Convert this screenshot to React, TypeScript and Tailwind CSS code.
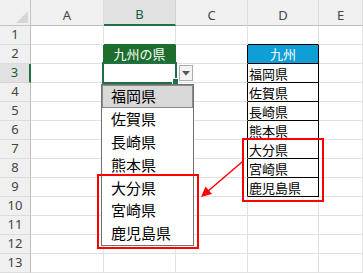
import React from "react";

const COLS = ["A", "B", "C", "D", "E"];
const ROWS = Array.from({ length: 13 }, (_, i) => i + 1);
const DDATA: Record<number, string> = {
  3: "福岡県",
  4: "佐賀県",
  5: "長崎県",
  6: "熊本県",
  7: "大分県",
  8: "宮崎県",
  9: "鹿児島県",
};
const LIST = ["福岡県", "佐賀県", "長崎県", "熊本県", "大分県", "宮崎県", "鹿児島県"];

const jp = { fontFamily: '"Noto Sans CJK JP", "Noto Sans", sans-serif' };
const ui = { fontFamily: '"Noto Sans", "Liberation Sans", sans-serif' };

function cellClass(r: number, c: string): string {
  if (c === "B" && r === 2) return "bg-[#1d6e2c] border-r border-b border-[#1d6e2c] text-white flex items-center justify-center text-[13px]";
  if (c === "B" && r === 1) return "bg-white border-r border-b border-r-[#e1e1e1] border-b-[#1d6e2c]";
  if (c === "D" && r === 1) return "bg-white border-r border-b border-r-[#e1e1e1] border-b-black";
  if (c === "D" && r === 2) return "bg-[#0f9ed5] border-r border-b border-black text-white flex items-center justify-center text-[13px]";
  if (c === "D" && r >= 3 && r <= 9) return "bg-white border-r border-b border-black text-black flex items-center pl-px pt-[2px] text-[13px]";
  if (c === "C" && r >= 2 && r <= 9) return "bg-white border-r border-b border-r-black border-b-[#e1e1e1]";
  if (c === "A" && r === 2) return "bg-white border-r border-b border-r-[#1d6e2c] border-b-[#e1e1e1]";
  return "bg-white border-r border-b border-[#e1e1e1]";
}

function cellText(r: number, c: string): string {
  if (c === "B" && r === 2) return "九州の県";
  if (c === "D" && r === 2) return "九州";
  if (c === "D" && DDATA[r]) return DDATA[r];
  return "";
}

export default function App() {
  return (
    <div className="relative w-[363px] h-[273px] overflow-hidden bg-white">
      <div className="grid grid-cols-[31px_73px_72px_72px_71px_1fr] grid-rows-[26px_repeat(13,19px)]">
        {/* corner */}
        <div className="relative bg-[#f0f0f0] border-r border-b border-[#c4c4c4]">
          <svg className="absolute left-0 top-0" width="31" height="26">
            <polygon points="16,23 28,23 28,11" fill="#d6d6d6" />
          </svg>
        </div>
        {COLS.map((c) =>
          c === "B" ? (
            <div
              key={c}
              className="bg-[#e1e1e1] border-r border-r-[#d0d0d0] border-b-2 border-b-[#1e7145] flex items-center justify-center pt-[6px] text-[13px] text-[#1e5c38]"
              style={ui}
            >
              {c}
            </div>
          ) : (
            <div
              key={c}
              className="bg-[#f0f0f0] border-r border-r-[#dcdcdc] border-b border-b-[#bdbdbd] flex items-center justify-center pt-[6px] text-[13px] text-[#444]"
              style={ui}
            >
              {c}
            </div>
          )
        )}
        {ROWS.map((r) => (
          <React.Fragment key={r}>
            {r === 3 ? (
              <div
                className="bg-[#e1e1e1] border-r-2 border-r-[#1e7145] border-b border-b-[#d4d4d4] flex items-center justify-center text-[13px] text-[#1e5c38]"
                style={ui}
              >
                {r}
              </div>
            ) : (
              <div
                className="bg-[#f0f0f0] border-r border-r-[#bdbdbd] border-b border-b-[#dcdcdc] flex items-center justify-center text-[13px] text-[#444]"
                style={ui}
              >
                {r}
              </div>
            )}
            {COLS.map((c) => (
              <div key={c} className={cellClass(r, c)} style={jp}>
                {cellText(r, c)}
              </div>
            ))}
          </React.Fragment>
        ))}
      </div>

      {/* selection around B3 */}
      <div className="absolute left-[102px] top-[62px] w-[75px] h-[22px] border-2 border-[#1e7145]" />
      <div className="absolute left-[172px] top-[78px] w-[7px] h-[7px] bg-[#1e7145] border border-white" />

      {/* dropdown button */}
      <div className="absolute left-[179px] top-[65px] w-[14px] h-[16px] bg-[#f3f3f3] border border-[#ababab] flex items-center justify-center">
        <svg width="8" height="5" viewBox="0 0 8 5">
          <polygon points="0,0 8,0 4,4.5" fill="#555" />
        </svg>
      </div>

      {/* dropdown list */}
      <div className="absolute left-[101px] top-[84px] w-[93px] h-[162px] bg-white border border-[#707070] flex flex-col" style={jp}>
        {LIST.map((t, i) =>
          i === 0 ? (
            <div key={t} className="h-[23px] bg-[#d9d9d9] border border-[#8c8c8c] flex items-center pl-[8px] text-[15px] text-black">
              {t}
            </div>
          ) : (
            <div key={t} className="h-[23px] flex items-center pl-[9px] text-[15px] text-black">
              {t}
            </div>
          )
        )}
      </div>

      {/* annotations */}
      <div className="absolute left-[97px] top-[174px] w-[102px] h-[75px] border-2 border-[#ff0000]" />
      <div className="absolute left-[242px] top-[138px] w-[82px] h-[64px] border-2 border-[#ff0000]" />
      <svg className="absolute left-0 top-0 pointer-events-none" width="363" height="273">
        <line x1="242" y1="162" x2="207" y2="192" stroke="#ff0000" strokeWidth="1.5" />
        <polygon points="201,197 205.5,186.5 212,194" fill="#ff0000" />
      </svg>
    </div>
  );
}
